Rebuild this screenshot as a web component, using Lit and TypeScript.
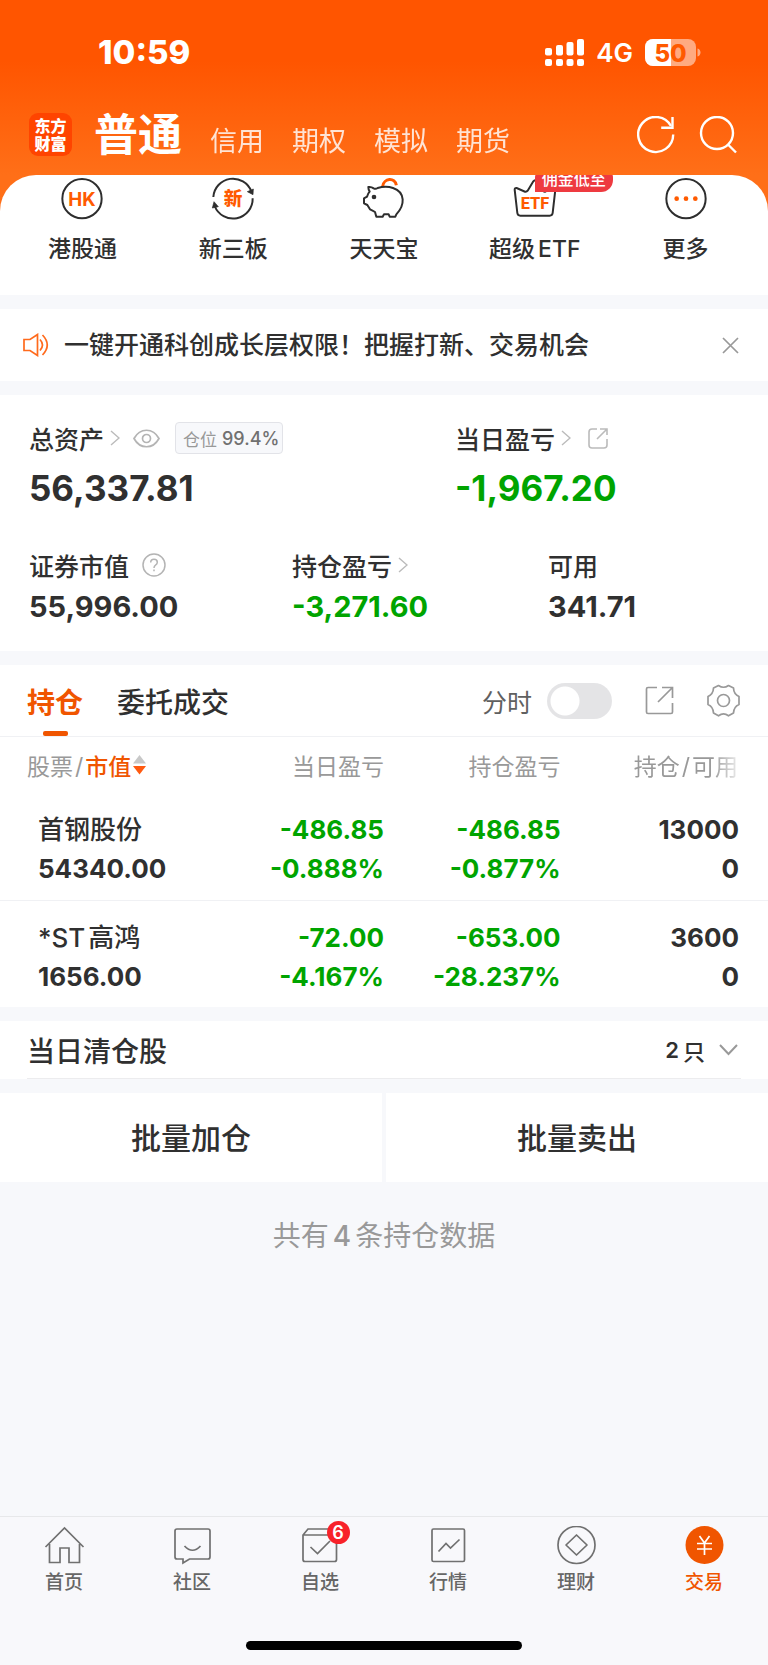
import { LitElement, html, css, svg, nothing } from "lit";
import { customElement, property, state } from "lit/decorators.js";

const fontStack = css`Inter, "Noto Sans CJK SC", sans-serif`;

const base = css`
  * {
    box-sizing: border-box;
  }
  svg {
    display: block;
    flex: none;
  }
  button {
    font: inherit;
    color: inherit;
    background: none;
    border: 0;
    padding: 0;
    margin: 0;
    cursor: pointer;
  }
  a {
    color: inherit;
    text-decoration: none;
  }
`;

const chevron = html`<svg width="10" height="16" viewBox="0 0 10 16" fill="none" stroke="#bbb" stroke-width="1.4" aria-hidden="true"><path d="M1 1l8 7-8 7" /></svg>`;

@customElement("status-bar")
export class StatusBar extends LitElement {
  static styles = [
    base,
    css`
      :host {
        display: flex;
        justify-content: space-between;
        align-items: center;
        height: 104px;
        padding: 0 67px 0 98px;
        color: #fff;
      }
      .time {
        font-size: 33px;
        font-weight: 800;
      }
      .right {
        display: flex;
        align-items: center;
        gap: 12px;
      }
      .net {
        font-size: 26px;
        font-weight: 600;
      }
      .batt-text {
        font: 800 24px Inter, sans-serif;
      }
    `,
  ];
  render() {
    return html`
      <span class="time">10:59</span>
      <div class="right">
        <svg width="39" height="27" viewBox="0 0 39 27" fill="#fff" aria-hidden="true">
          <rect x="0" y="9" width="7" height="7.500" rx="2" /><rect x="11" y="6" width="7" height="10.500" rx="2" />
          <rect x="21.500" y="3" width="7" height="13.500" rx="2" /><rect x="32" y="0" width="7" height="16.500" rx="2" />
          <rect x="0" y="20" width="7" height="7" rx="2" /><rect x="11" y="20" width="7" height="7" rx="2" />
          <rect x="21.500" y="20" width="7" height="7" rx="2" /><rect x="32" y="20" width="7" height="7" rx="2" />
        </svg>
        <span class="net">4G</span>
        <svg width="56" height="27" viewBox="0 0 56 27" role="img" aria-label="50%">
          <clipPath id="shell"><rect width="51" height="27" rx="8" /></clipPath>
          <g clip-path="url(#shell)">
            <rect width="51" height="27" fill="#fff" fill-opacity=".5" />
            <rect width="26" height="27" fill="#fff" />
          </g>
          <path d="M52.500 9.500c4 1 4 7 0 8z" fill="#fff" fill-opacity=".5" />
          <text class="batt-text" x="25.500" y="22.500" text-anchor="middle" fill="#ff5a00">50</text>
        </svg>
      </div>
    `;
  }
}

@customElement("account-bar")
export class AccountBar extends LitElement {
  @state() private active = "普通";
  static styles = [
    base,
    css`
      :host {
        display: flex;
        align-items: center;
        height: 71px;
        padding: 0 31px 10px 29px;
        color: #fff;
      }
      .logo {
        width: 43px;
        height: 43px;
        border-radius: 9px;
        background: #ff4400;
        display: flex;
        flex-direction: column;
        justify-content: center;
        text-align: center;
        font-size: 16px;
        line-height: 18px;
        font-weight: 900;
      }
      nav {
        display: flex;
        align-items: baseline;
        gap: 28px;
        margin-left: 22px;
        padding-top: 7px;
        flex: 1;
      }
      .acct {
        font-size: 27px;
        line-height: 61px;
        opacity: 0.82;
      }
      .acct.on {
        font-size: 44px;
        font-weight: 700;
        opacity: 1;
      }
      .actions {
        display: flex;
        gap: 24px;
      }
    `,
  ];
  render() {
    return html`
      <div class="logo"><span>东方</span><span>财富</span></div>
      <nav aria-label="账户">
        ${["普通", "信用", "期权", "模拟", "期货"].map(
          (n) => html`<button class="acct ${n === this.active ? "on" : ""}" @click=${() => (this.active = n)}>${n}</button>`
        )}
      </nav>
      <div class="actions">
        <button aria-label="刷新">
          <svg width="38" height="38" viewBox="0 0 38 38" fill="none" stroke="#fff" stroke-width="2.400">
            <path d="M36.200 18.500A17.500 17.500 0 1 1 34 10" /><path d="M35.500 1v10.800H24.200" />
          </svg>
        </button>
        <button aria-label="搜索">
          <svg width="38" height="38" viewBox="0 0 38 38" fill="none" stroke="#fff" stroke-width="2.400">
            <circle cx="18" cy="17" r="16" /><path d="M29 28.500l8 8" />
          </svg>
        </button>
      </div>
    `;
  }
}

const ink = "#2e2e2e";
const hot = "#ff5a00";

const quickItems = [
  {
    label: html`港股通`,
    icon: svg`<circle cx="90" cy="71" r="59" fill="none" stroke=${ink} stroke-width="6" />
      <text x="90" y="92" text-anchor="middle" font-family="Inter, sans-serif" font-weight="700" font-size="56" fill=${hot}>HK</text>`,
  },
  {
    label: html`新三板`,
    icon: svg`<g fill="none" stroke=${ink} stroke-width="6"><path d="M31 66A59 59 0 0 1 145 49" /><path d="M149 70A59 59 0 0 1 35 93" /></g>
      <path d="M133 50l18-8-1 17zM28 99l5-19 13 15z" fill=${ink} stroke=${ink} stroke-width="2" stroke-linejoin="round" />
      <text x="90" y="91" text-anchor="middle" font-family="Noto Sans CJK SC, sans-serif" font-weight="900" font-size="56" fill=${hot}>新</text>`,
  },
  {
    label: html`天天宝`,
    icon: svg`<g fill="none" stroke-linejoin="round"><path d="M86 34c3-25 37-28 41-3" stroke=${hot} stroke-width="9" />
      <path d="M43 36c6-1 12 1 16 4q6 3 12-1c14-4 34-4 46 0 38 13 36 52 10 79l-3 7h-17l-3-7H90l-4 7H67l-4-14q-10-6-15-8l-8-13-10-5V70l9-5q2-9 8-15-4-6-4-14z" stroke=${ink} stroke-width="6" /></g>
      <circle cx="60" cy="66" r="7" fill=${ink} />`,
  },
  {
    label: html`超级<span class="latin">ETF</span>`,
    tag: "佣金低至",
    icon: svg`<path d="M29 44q0-6 6-5l25 11q5 1 8-3l17-28q5-7 10 0l18 28q3 4 8 3l24-11q6-1 6 5l-8 70q-1 8-9 8H46q-8 0-9-8z" fill="none" stroke=${ink} stroke-width="6" />
      <text x="90" y="103" text-anchor="middle" font-family="Roboto, sans-serif" font-weight="800" font-size="49" fill=${hot}>ETF</text>`,
  },
  {
    label: html`更多`,
    icon: svg`<circle cx="90" cy="71" r="59" fill="none" stroke=${ink} stroke-width="6" />
      <g fill=${hot}><circle cx="62" cy="71" r="7" /><circle cx="90" cy="71" r="7" /><circle cx="118" cy="71" r="7" /></g>`,
  },
];

@customElement("quick-grid")
export class QuickGrid extends LitElement {
  static styles = [
    base,
    css`
      :host {
        display: block;
        background: #ff6f18;
      }
      .panel {
        display: grid;
        grid-template-columns: repeat(5, 1fr);
        padding: 0 7px 29px;
        background: #fff;
        border-radius: 36px 36px 0 0;
        overflow: hidden;
      }
      .item {
        position: relative;
        display: flex;
        flex-direction: column;
        align-items: center;
        font-size: 23px;
        line-height: 34px;
        font-weight: 500;
        gap: 8px;
        color: #303030;
      }
      .latin {
        margin-left: 3px;
      }
      .tag {
        position: absolute;
        left: 50%;
        top: -9px;
        padding: 0 7px;
        border-radius: 12px 12px 12px 0;
        background: #ee3a40;
        color: #fff;
        font-size: 16px;
        line-height: 26px;
        white-space: nowrap;
      }
    `,
  ];
  render() {
    return html`<div class="panel">
      ${quickItems.map(
        (q) => html`<a class="item" href="#">
          <svg width="60" height="49" viewBox="0 0 180 147" aria-hidden="true">${q.icon}</svg>
          ${"tag" in q ? html`<span class="tag">${q.tag}</span>` : nothing}
          <span>${q.label}</span>
        </a>`
      )}
    </div>`;
  }
}

@customElement("notice-bar")
export class NoticeBar extends LitElement {
  static styles = [
    base,
    css`
      :host {
        display: flex;
        align-items: center;
        gap: 15px;
        height: 72px;
        padding: 0 29px 0 23px;
        background: #fff;
        font-size: 25px;
        line-height: 36px;
        color: #303030;
        font-weight: 500;
      }
      .text {
        flex: 1;
      }
    `,
  ];
  render() {
    return html`
      <svg width="26" height="24" viewBox="0 0 26 24" fill="none" stroke="#ff6a1c" stroke-width="1.700" aria-hidden="true">
        <path d="M1 6.500h6L14.500 1.500v21L7 17.500H1z" /><path d="M17 6.500q5 5.500 0 11M19.500 2q9.500 10 0 20" />
      </svg>
      <span class="text">一键开通科创成长层权限！把握打新、交易机会</span>
      <button aria-label="关闭">
        <svg width="17" height="17" viewBox="0 0 17 17" fill="none" stroke="#999" stroke-width="1.700"><path d="M1 1l15 15M16 1L1 16" /></svg>
      </button>
    `;
  }
}

@customElement("asset-summary")
export class AssetSummary extends LitElement {
  static styles = [
    base,
    css`
      :host {
        display: block;
        padding: 26px 29px 24px;
        background: #fff;
        color: #303030;
      }
      .row {
        display: grid;
      }
      .main {
        grid-template-columns: 426fr 284fr;
      }
      .sub {
        grid-template-columns: 263fr 256fr 191fr;
        margin-top: 40px;
      }
      .label {
        display: flex;
        align-items: center;
        height: 34px;
        font-size: 25px;
        font-weight: 500;
      }
      .chev {
        margin-left: 6px;
      }
      .after {
        margin-left: 13px;
      }
      .pct {
        display: flex;
        gap: 5px;
        align-items: center;
        height: 32px;
        padding: 0 3px 0 7px;
        margin-left: 15px;
        border: 1px solid #e2e3e8;
        border-radius: 4px;
        background: #f7f8fb;
        font-size: 17px;
        color: #999;
        font-weight: 400;
      }
      .pct b {
        font-size: 18px;
        font-weight: 500;
        color: #707070;
      }
      .big {
        font-size: 35px;
        line-height: 40px;
        font-weight: 700;
        margin-top: 13px;
      }
      .mid {
        font-size: 29px;
        line-height: 40px;
        font-weight: 700;
        margin-top: 5px;
      }
      .down {
        color: #00a400;
      }
    `,
  ];
  render() {
    return html`
      <div class="row main">
        <div>
          <div class="label">
            总资产<span class="chev">${chevron}</span>
            <button class="after" aria-label="隐藏金额">
              <svg width="27" height="19" viewBox="0 0 27 19" fill="none" stroke="#b4b4b4" stroke-width="1.700">
                <path d="M1 9.500C7-1.500 20-1.500 26 9.500 20 20.500 7 20.500 1 9.500z" /><circle cx="13.500" cy="9.500" r="4" />
              </svg>
            </button>
            <span class="pct">仓位<b>99.4%</b></span>
          </div>
          <div class="big">56,337.81</div>
        </div>
        <div>
          <div class="label">
            当日盈亏<span class="chev">${chevron}</span>
            <button class="after" aria-label="分享盈亏">
              <svg width="25" height="21" viewBox="0 0 25 21" fill="none" stroke="#bbb" stroke-width="1.600">
                <path d="M13 1H8q-3 0-3 3v13q0 3 3 3h12q3 0 3-3v-6M16 1h7v6M13 11L23 1" />
              </svg>
            </button>
          </div>
          <div class="big down">-1,967.20</div>
        </div>
      </div>
      <div class="row sub">
        <div>
          <div class="label">
            证券市值
            <button class="after" aria-label="说明">
              <svg width="24" height="24" viewBox="0 0 24 24" fill="none" stroke="#b4b4b4" stroke-width="1.500">
                <circle cx="12" cy="12" r="11" /><path d="M8.700 9.500q0-3.300 3.300-3.300t3.300 3q0 1.800-1.800 2.900-1.500 1-1.500 3M12 16.500v1.800" />
              </svg>
            </button>
          </div>
          <div class="mid">55,996.00</div>
        </div>
        <div>
          <div class="label">持仓盈亏<span class="chev">${chevron}</span></div>
          <div class="mid down">-3,271.60</div>
        </div>
        <div>
          <div class="label">可用</div>
          <div class="mid">341.71</div>
        </div>
      </div>
    `;
  }
}

interface Holding {
  name: unknown;
  value: string;
  day: [string, string];
  total: [string, string];
  qty: [string, string];
}

const holdings: Holding[] = [
  { name: "首钢股份", value: "54340.00", day: ["-486.85", "-0.888%"], total: ["-486.85", "-0.877%"], qty: ["13000", "0"] },
  { name: html`*ST<span class="han">高鸿</span>`, value: "1656.00", day: ["-72.00", "-4.167%"], total: ["-653.00", "-28.237%"], qty: ["3600", "0"] },
];

@customElement("holdings-panel")
export class HoldingsPanel extends LitElement {
  @property({ attribute: false }) rows = holdings;
  @state() private tab = 0;

  static styles = [
    base,
    css`
      :host {
        display: block;
        background: #fff;
        color: #303030;
      }
      .bar {
        display: flex;
        align-items: center;
        height: 72px;
        padding: 0 28px 0 27px;
        border-bottom: 1px solid #f0f1f4;
      }
      .tab {
        position: relative;
        height: 71px;
        font-size: 28px;
        font-weight: 500;
        margin-right: 34px;
      }
      .tab.on {
        font-weight: 700;
        color: #f05500;
      }
      .tab.on::after {
        content: "";
        position: absolute;
        left: 50%;
        bottom: 0;
        width: 25px;
        height: 5px;
        margin-left: -12px;
        border-radius: 2px;
        background: #f05500;
      }
      .tools {
        display: flex;
        align-items: center;
        margin-left: auto;
      }
      .tools label {
        font-size: 25px;
        color: #606060;
        margin-right: 15px;
      }
      .switch {
        appearance: none;
        width: 65px;
        height: 36px;
        margin: 0 33px 0 0;
        border-radius: 18px;
        background: radial-gradient(circle at 18px 18px, #fff 14px, #e4e4e6 15px);
      }
      .switch:checked {
        background: radial-gradient(circle at 47px 18px, #fff 14px, #f05500 15px);
      }
      .export {
        margin-right: 33px;
      }
      table {
        width: 100%;
        border-collapse: collapse;
        table-layout: fixed;
      }
      .c1 {
        width: 27%;
      }
      .c2,
      .c3 {
        width: 23%;
      }
      .c4 {
        width: 27%;
      }
      th {
        height: 56px;
        padding: 0;
        font-size: 23px;
        font-weight: 400;
        color: #999;
        text-align: right;
        white-space: nowrap;
      }
      th:first-child {
        padding-left: 27px;
        text-align: left;
      }
      th:last-child {
        padding-right: 30px;
      }
      .slash {
        margin: 0 2px;
      }
      .fade {
        -webkit-mask-image: linear-gradient(to left, rgba(0, 0, 0, 0.2), #000 26px);
        mask-image: linear-gradient(to left, rgba(0, 0, 0, 0.2), #000 26px);
      }
      .sort {
        display: inline-flex;
        align-items: center;
        gap: 2px;
        color: #f05500;
        font-weight: 500;
      }
      td {
        padding: 17px 0 11px;
        font-size: 26px;
        line-height: 39px;
        font-weight: 700;
        text-align: right;
      }
      td:first-child {
        padding-left: 38px;
        text-align: left;
      }
      td:last-child {
        padding-right: 29px;
      }
      tbody tr {
        height: 107px;
      }
      tbody tr + tr td {
        border-top: 1px solid #f0f1f4;
      }
      td div {
        height: 39px;
      }
      .name {
        font-weight: 500;
      }
      .han {
        margin-left: 3px;
      }
      .down {
        color: #00a400;
      }
    `,
  ];

  private pair(v: [string, string]) {
    return html`<div>${v[0]}</div><div>${v[1]}</div>`;
  }

  render() {
    return html`
      <div class="bar">
        ${["持仓", "委托成交"].map(
          (t, i) => html`<button class="tab ${i === this.tab ? "on" : ""}" @click=${() => (this.tab = i)}>${t}</button>`
        )}
        <div class="tools">
          <label for="intraday">分时</label>
          <input id="intraday" class="switch" type="checkbox" role="switch" />
          <button class="export" aria-label="分享持仓">
            <svg width="29" height="29" viewBox="0 0 29 29" fill="none" stroke="#999" stroke-width="1.700">
              <path d="M12 1.500H3q-1.500 0-1.500 1.500v23q0 1.500 1.500 1.500h23q1.500 0 1.500-1.500v-9M17 1.500h10.500V12M13 16L27 2" />
            </svg>
          </button>
          <button aria-label="设置">
            <svg width="33" height="33" viewBox="0 0 33 33" fill="none" stroke="#999" stroke-width="1.700" stroke-linejoin="round">
              <path d="M11.500 1.500q5 3.500 10 0l5 2.500q.2 6 5.500 8.500v8q-5.300 2.500-5.500 8.500l-5 2.800q-5-3.800-10 0L6.500 29q-.2-6-5.500-8.500v-8Q6.300 10 6.500 4z" />
              <circle cx="16.500" cy="16.500" r="6" />
            </svg>
          </button>
        </div>
      </div>
      <table>
        <colgroup><col class="c1" /><col class="c2" /><col class="c3" /><col class="c4" /></colgroup>
        <thead>
          <tr>
            <th scope="col">股票<span class="slash">/</span><button class="sort">市值<svg width="13" height="20" viewBox="0 0 13 20" aria-hidden="true"><path d="M6.500 0L13 8.500H0z" fill="#c8c8c8" /><path d="M6.500 19.500L0 11h13z" fill="#ff5a10" /></svg></button></th>
            <th scope="col">当日盈亏</th>
            <th scope="col">持仓盈亏</th>
            <th scope="col"><span class="fade">持仓<span class="slash">/</span>可用</span></th>
          </tr>
        </thead>
        <tbody>
          ${this.rows.map(
            (r) => html`<tr>
              <td><div class="name">${r.name}</div><div>${r.value}</div></td>
              <td class="down">${this.pair(r.day)}</td>
              <td class="down">${this.pair(r.total)}</td>
              <td>${this.pair(r.qty)}</td>
            </tr>`
          )}
        </tbody>
      </table>
    `;
  }
}

const tabs = [
  {
    label: "首页",
    icon: svg`<path d="M1.500 21L20.500 2l19 19M5.500 18v18.500h10.500V22h9v14.500h10.500V18" />`,
  },
  {
    label: "社区",
    icon: svg`<path d="M5 3h31q2 0 2 2v26q0 2-2 2H17.500l-6.500 4v-4H5q-2 0-2-2V5q0-2 2-2z" /><path d="M12.500 20q8 8.500 16 0" />`,
  },
  {
    label: "自选",
    badge: "6",
    icon: svg`<path d="M8 3h24l4.500 5v25.500q0 2-2 2H5q-2 0-2-2V9zM3.500 9h33" /><path d="M10.500 21l7 6.500L30 15" />`,
  },
  {
    label: "行情",
    icon: svg`<rect x="4" y="3" width="32.500" height="32.500" rx="1.500" /><path d="M10.500 25.500l7.500-8 4.500 4.500 9-8.500" />`,
  },
  {
    label: "理财",
    icon: svg`<circle cx="20.500" cy="19" r="18.500" /><path d="M20.500 9L31 19 20.500 29 10 19z" stroke-linejoin="round" />`,
  },
  {
    label: "交易",
    icon: svg`<circle cx="20.500" cy="19" r="19" fill="#f05500" stroke="none" /><path d="M15.500 10l5 7 5-7M13 17.500h15M13 23h15M20.500 17.500V29" stroke="#fff" stroke-width="1.700" />`,
  },
];

@customElement("tab-bar")
export class TabBar extends LitElement {
  @state() private active = 5;
  static styles = [
    base,
    css`
      :host {
        display: block;
        background: #f8f8fb;
        border-top: 1px solid #e7e8ea;
      }
      nav {
        display: grid;
        grid-template-columns: repeat(6, 1fr);
        height: 124px;
        padding-top: 9px;
      }
      .item {
        display: flex;
        flex-direction: column;
        align-items: center;
        gap: 5px;
        height: 70px;
        font-size: 19px;
        line-height: 26px;
        font-weight: 500;
        color: #666;
      }
      .item.on {
        color: #f05500;
      }
      .glyph {
        position: relative;
      }
      .badge {
        position: absolute;
        left: 27px;
        top: -5px;
        width: 23px;
        height: 23px;
        border-radius: 50%;
        background: #f8222a;
        color: #fff;
        font-size: 18px;
        line-height: 24px;
        font-weight: 600;
        text-align: center;
      }
      .home {
        width: 36%;
        height: 9px;
        margin: 0 auto 15px;
        border-radius: 5px;
        background: #000;
      }
    `,
  ];
  render() {
    return html`
      <nav aria-label="主导航">
        ${tabs.map(
          (t, i) => html`<a href="#" class="item ${i === this.active ? "on" : ""}">
            <span class="glyph">
              <svg width="41" height="39" viewBox="0 0 41 39" fill="none" stroke="#707070" stroke-width="1.700" aria-hidden="true">${t.icon}</svg>
              ${"badge" in t ? html`<span class="badge">${t.badge}</span>` : nothing}
            </span>
            ${t.label}
          </a>`
        )}
      </nav>
      <div class="home"></div>
    `;
  }
}

@customElement("app-root")
export class AppRoot extends LitElement {
  static styles = [
    base,
    css`
      :host {
        display: flex;
        flex-direction: column;
        min-height: 100vh;
        background: #f7f8fb;
        font-family: ${fontStack};
        color: #303030;
      }
      .head {
        background: linear-gradient(#ff5500 35%, #ff6f18);
      }
      .stack {
        display: flex;
        flex-direction: column;
        gap: 14px;
      }
      .cleared {
        background: #fff;
        padding: 0 27px;
      }
      .cleared button {
        display: flex;
        align-items: center;
        width: 100%;
        height: 58px;
        border-bottom: 1px solid #ececee;
        font-size: 28px;
        font-weight: 500;
      }
      .count {
        display: flex;
        align-items: center;
        gap: 4px;
        margin-left: auto;
        font-size: 22px;
      }
      .count span {
        font-weight: 600;
      }
      .count svg {
        margin: 0 3px 0 10px;
      }
      .batch {
        display: grid;
        grid-template-columns: 1fr 1fr;
        gap: 4px;
      }
      .batch button {
        height: 89px;
        padding-bottom: 3px;
        background: #fff;
        font-size: 30px;
        font-weight: 500;
      }
      .total {
        margin: 33px 0 60px;
        text-align: center;
        font-size: 28px;
        line-height: 42px;
        color: #999;
      }
      .total span {
        margin: 0 4px;
        font-weight: 500;
      }
      tab-bar {
        margin-top: auto;
      }
    `,
  ];
  render() {
    return html`
      <header class="head">
        <status-bar></status-bar>
        <account-bar></account-bar>
      </header>
      <main>
        <div class="stack">
          <quick-grid></quick-grid>
          <notice-bar></notice-bar>
          <asset-summary></asset-summary>
          <holdings-panel></holdings-panel>
          <section class="cleared">
            <button>
              当日清仓股
              <span class="count"><span>2</span>只
                <svg width="19" height="12" viewBox="0 0 19 12" fill="none" stroke="#999" stroke-width="2" aria-hidden="true"><path d="M1 1l8.500 9L18 1" /></svg>
              </span>
            </button>
          </section>
          <section class="batch">
            <button>批量加仓</button>
            <button>批量卖出</button>
          </section>
        </div>
        <p class="total">共有<span>4</span>条持仓数据</p>
      </main>
      <tab-bar></tab-bar>
    `;
  }
}
